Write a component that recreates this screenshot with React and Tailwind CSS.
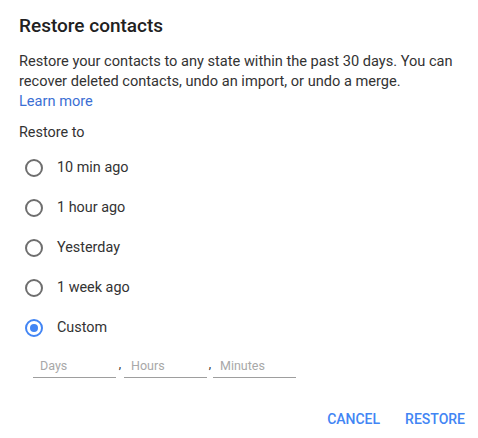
import React, { useState } from 'react'

const options = ['10 min ago', '1 hour ago', 'Yesterday', '1 week ago', 'Custom']

function Radio({ checked }) {
  return (
    <span
      className={`flex h-[18px] w-[18px] items-center justify-center rounded-full border-2 ${checked ? 'border-[#4285f4]' : 'border-[#6e6e6e]'}`}
    >
      {checked && <span className="h-[8px] w-[8px] rounded-full bg-[#4285f4]" />}
    </span>
  )
}

function Field({ placeholder }) {
  return (
    <input
      className="h-[24px] w-[83px] border-b border-[#9e9e9e] bg-transparent px-[7px] text-[12.5px] text-[#212121] placeholder:text-[#a8a8a8] focus:outline-none"
      placeholder={placeholder}
    />
  )
}

export default function App() {
  const [selected, setSelected] = useState('Custom')

  return (
    <div className="h-[438px] w-[478px] bg-white font-['Roboto',sans-serif] text-[#333]">
      <div className="px-[19px] pt-[13px]">
        <h1 className="text-[19px] font-medium leading-[26px] text-[#212121]">Restore contacts</h1>
        <p className="mt-[12px] text-[14.6px] leading-[20px] text-[#333]">
          Restore your contacts to any state within the past 30 days. You can recover deleted contacts, undo an import, or undo a merge.
          <br />
          <a href="#" className="text-[#3b6fd4]">Learn more</a>
        </p>
        <div className="mt-[12px] text-[14.4px] leading-[20px] text-[#333]">Restore to</div>
        <div className="mt-[5px] flex flex-col">
          {options.map((opt) => (
            <label key={opt} className="flex h-[40px] cursor-pointer items-center" onClick={() => setSelected(opt)}>
              <span className="ml-[6px]">
                <Radio checked={selected === opt} />
              </span>
              <span className="ml-[14px] text-[14.4px] text-[#333]">{opt}</span>
            </label>
          ))}
        </div>
        <div className="mt-[6px] flex items-end pl-[14px]">
          <Field placeholder="Days" />
          <span className="mb-[6px] w-[8px] text-center text-[12px] leading-[16px] text-[#333]">,</span>
          <Field placeholder="Hours" />
          <span className="mb-[6px] w-[6px] text-center text-[12px] leading-[16px] text-[#333]">,</span>
          <Field placeholder="Minutes" />
        </div>
      </div>
      <div className="mt-[25px] flex justify-end gap-[9px] pr-[5px]">
        <button className="px-[8px] py-[6px] text-[14px] font-medium uppercase text-[#4285f4]">Cancel</button>
        <button className="px-[8px] py-[6px] text-[14px] font-medium uppercase text-[#4285f4]">Restore</button>
      </div>
    </div>
  )
}
